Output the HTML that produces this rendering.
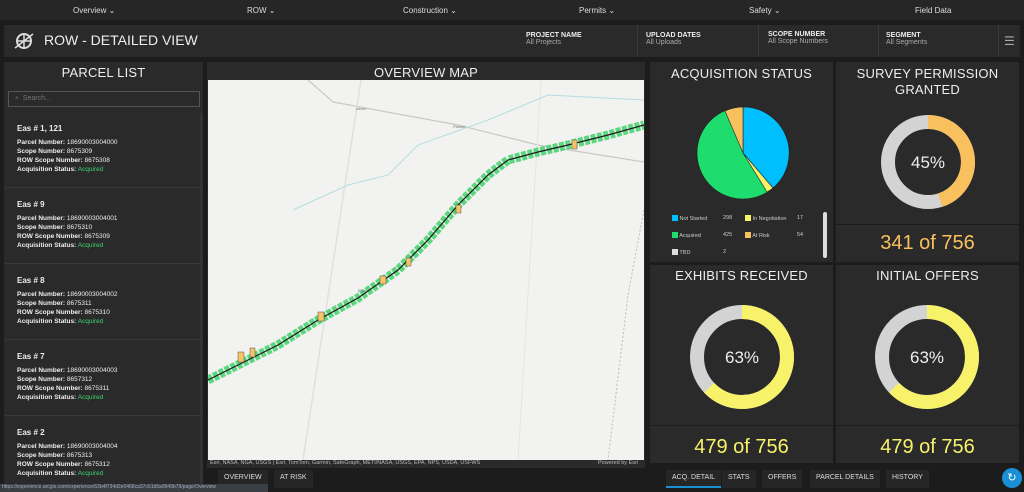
<!DOCTYPE html>
<html><head><meta charset="utf-8"><style>
*{margin:0;padding:0;box-sizing:border-box}
body{width:1024px;height:492px;background:#1c1c1c;font-family:"Liberation Sans",sans-serif;color:#ddd;position:relative;overflow:hidden}
.abs{position:absolute}
.panel{position:absolute;background:#2a2a2a}
.nav{left:0;top:0;width:1024px;height:20px;background:#262626;font-size:8px;color:#ddd}
.nav span{position:absolute;top:6px}
.title{font-size:13px;color:#eee;text-align:center;letter-spacing:.2px}
.f{position:absolute;top:7px;font-size:7px}
.f b{display:block;color:#eee;font-size:7px}
.f i{font-style:normal;color:#aaa}
.item{position:absolute;left:5px;width:196px;height:76px;border-bottom:1px solid #3a3a3a;font-size:6.5px;color:#eee;padding:12px 0 0 12px;line-height:9px}
.item h4{font-size:8px;margin-bottom:5px}
.item .g{color:#3cd46a}
.big{position:absolute;font-size:20px;text-align:center;width:183px}
.tab{position:absolute;top:470px;font-size:7px;color:#ddd;height:18px;line-height:16px;padding:0 6px;background:#262626}
.lg div{position:relative;height:17px}
.lg .n{position:absolute;top:0}
.sw{display:inline-block;width:6px;height:6px;vertical-align:-1px}
</style></head><body>
<div class="abs nav"><span style="left:73px">Overview ⌄</span><span style="left:247px">ROW ⌄</span><span style="left:403px">Construction ⌄</span><span style="left:579px">Permits ⌄</span><span style="left:749px">Safety ⌄</span><span style="left:915px">Field Data</span></div>
<div class="panel" style="left:4px;top:25px;width:1016px;height:32px"></div>
<svg class="abs" style="left:13px;top:31px" width="22" height="20" viewBox="0 0 22 20"><circle cx="11" cy="10" r="7" fill="none" stroke="#ddd" stroke-width="2"/><path d="M11 4v12M5 10h12M2 17L20 3" stroke="#ddd" stroke-width="1.5"/></svg>
<div class="abs" style="left:44px;top:32px;font-size:14px;color:#eee">ROW - DETAILED VIEW</div>
<div class="f" style="left:526px;top:32px"><b>PROJECT NAME</b><i>All Projects</i></div>
<div class="abs" style="left:637px;top:25px;width:1px;height:32px;background:#3a3a3a"></div>
<div class="f" style="left:646px;top:32px"><b>UPLOAD DATES</b><i>All Uploads</i></div>
<div class="abs" style="left:758px;top:25px;width:1px;height:32px;background:#3a3a3a"></div>
<div class="f" style="left:768px;top:31px"><b>SCOPE NUMBER</b><i>All Scope Numbers</i></div>
<div class="abs" style="left:878px;top:25px;width:1px;height:32px;background:#3a3a3a"></div>
<div class="f" style="left:886px;top:32px"><b>SEGMENT</b><i>All Segments</i></div>
<div class="abs" style="left:998px;top:25px;width:1px;height:32px;background:#3a3a3a"></div>
<div class="abs" style="left:1004px;top:34px;font-size:12px;color:#aaa">☰</div>

<div class="panel" style="left:4px;top:62px;width:199px;height:426px"></div>
<div class="abs title" style="left:4px;top:65px;width:199px">PARCEL LIST</div>
<div class="abs" style="left:8px;top:91px;width:192px;height:16px;border:1px solid #555;font-size:7px;color:#777;padding:3px 0 0 6px">⌕ &nbsp;Search...</div>
<div class="abs" style="left:200px;top:113px;width:3px;height:372px;background:#333"></div>
<div class="item" style="top:112px"><h4>Eas # 1, 121</h4><b>Parcel Number:</b> 18690003004000<br><b>Scope Number:</b> 8675309<br><b>ROW Scope Number:</b> 8675308<br><b>Acquisition Status:</b> <span class="g">Acquired</span></div>
<div class="item" style="top:188px"><h4>Eas # 9</h4><b>Parcel Number:</b> 18690003004001<br><b>Scope Number:</b> 8675310<br><b>ROW Scope Number:</b> 8675309<br><b>Acquisition Status:</b> <span class="g">Acquired</span></div>
<div class="item" style="top:264px"><h4>Eas # 8</h4><b>Parcel Number:</b> 18690003004002<br><b>Scope Number:</b> 8675311<br><b>ROW Scope Number:</b> 8675310<br><b>Acquisition Status:</b> <span class="g">Acquired</span></div>
<div class="item" style="top:340px"><h4>Eas # 7</h4><b>Parcel Number:</b> 18690003004003<br><b>Scope Number:</b> 8657312<br><b>ROW Scope Number:</b> 8675311<br><b>Acquisition Status:</b> <span class="g">Acquired</span></div>
<div class="item" style="top:416px;border:none"><h4>Eas # 2</h4><b>Parcel Number:</b> 18690003004004<br><b>Scope Number:</b> 8675313<br><b>ROW Scope Number:</b> 8675312<br><b>Acquisition Status:</b> <span class="g">Acquired</span></div>

<div class="panel" style="left:207px;top:62px;width:438px;height:406px"></div>
<div class="abs title" style="left:207px;top:65px;width:438px">OVERVIEW MAP</div>
<svg class="abs" style="left:208px;top:80px" width="436" height="380" viewBox="0 0 436 380">
<rect width="436" height="380" fill="#f2f2f0"/>
<path d="M100 0L125 22 250 45 330 65 436 82" stroke="#c8c8c8" stroke-width="1.2" fill="none"/>
<path d="M153 0L95 380" stroke="#e0e0e0" stroke-width="1.5" fill="none"/>
<path d="M333 0L310 380" stroke="#e4e4e4" fill="none"/>
<path d="M85 130L140 105 180 95 210 65 280 40 340 15 436 20" stroke="#b5dde3" fill="none"/>
<path d="M436 130L420 215 400 380" stroke="#bbb" stroke-dasharray="2 2" fill="none"/>
<path d="M0 300L30 285 70 265 110 240 150 218 190 190 220 160 250 125 280 95 300 80 330 72 360 65 400 55 436 45" stroke="#5cd67f" stroke-width="9" fill="none" stroke-dasharray="5 1.5"/>
<path d="M0 300L30 285 70 265 110 240 150 218 190 190 220 160 250 125 280 95 300 80 330 72 360 65 400 55 436 45" stroke="#1a1a1a" stroke-width="1.2" fill="none"/>
<g fill="#f5c36a" stroke="#333" stroke-width=".4"><rect x="30" y="272" width="6" height="10"/><rect x="42" y="268" width="5" height="9"/><rect x="110" y="232" width="6" height="9"/><rect x="172" y="196" width="6" height="8"/><rect x="198" y="178" width="5" height="8"/><rect x="248" y="125" width="5" height="8"/><rect x="364" y="60" width="5" height="9"/></g>
<text x="150" y="212" font-size="4" fill="#777">Elba</text><text x="148" y="30" font-size="4" fill="#777">Akron</text><text x="245" y="48" font-size="4" fill="#777">Platner</text>
</svg>
<div class="abs" style="left:210px;top:460px;font-size:5.5px;color:#bbb">Esri, NASA, NGA, USGS | Esri, TomTom, Garmin, SafeGraph, METI/NASA, USGS, EPA, NPS, USDA, USFWS</div>
<div class="abs" style="left:598px;top:460px;font-size:5.5px;color:#bbb">Powered by Esri</div>

<div class="panel" style="left:650px;top:62px;width:183px;height:200px"></div>
<div class="abs title" style="left:650px;top:66px;width:183px">ACQUISITION STATUS</div>
<svg class="abs" style="left:695px;top:105px" width="96" height="96" viewBox="-48 -48 96 96">
<circle r="46" fill="#1fdc6e" stroke="#222" stroke-width=".6"/>
<path d="M0 0L0 -46A46 46 0 0 1 30 35Z" fill="#00bfff" stroke="#222" stroke-width=".6"/>
<path d="M0 0L30 35A46 46 0 0 1 24 39Z" fill="#f7f26a" stroke="#222" stroke-width=".6"/>
<path d="M0 0L-18 -42A46 46 0 0 1 0 -46Z" fill="#f9c05e" stroke="#222" stroke-width=".6"/>
</svg>
<div class="abs lg" style="left:672px;top:215px;font-size:5.5px;color:#ccc;width:70px">
<div><span class="sw" style="background:#00bfff"></span> Not Started<span class="n" style="left:51px">298</span></div>
<div><span class="sw" style="background:#1fdc6e"></span> Acquired<span class="n" style="left:51px">425</span></div>
<div><span class="sw" style="background:#ddd"></span> TBD<span class="n" style="left:51px">2</span></div>
</div>
<div class="abs lg" style="left:745px;top:215px;font-size:5.5px;color:#ccc;width:70px">
<div><span class="sw" style="background:#f7f26a"></span> In Negotiation<span class="n" style="left:52px">17</span></div>
<div><span class="sw" style="background:#f9c05e"></span> At Risk<span class="n" style="left:52px">54</span></div>
</div>
<div class="abs" style="left:823px;top:212px;width:4px;height:46px;background:#ddd;border-radius:2px"></div>

<div class="panel" style="left:836px;top:62px;width:183px;height:162px"></div>
<div class="abs title" style="left:836px;top:66px;width:183px;line-height:16px">SURVEY PERMISSION<br>GRANTED</div>
<svg class="abs" style="left:878px;top:112px" width="100" height="100" viewBox="0 0 100 100"><circle cx="50" cy="50" r="40" fill="none" stroke="#d3d3d3" stroke-width="14"/><circle cx="50" cy="50" r="40" fill="none" stroke="#f9c05e" stroke-width="14" stroke-dasharray="113 300" transform="rotate(-90 50 50)"/><text x="50" y="56" fill="#eee" font-size="17" text-anchor="middle" font-family="Liberation Sans">45%</text></svg>
<div class="panel" style="left:836px;top:225px;width:183px;height:37px"></div>
<div class="big" style="left:836px;top:232px;color:#f9c05e">341 of 756</div>

<div class="panel" style="left:650px;top:265px;width:183px;height:160px"></div>
<div class="abs title" style="left:650px;top:268px;width:183px">EXHIBITS RECEIVED</div>
<svg class="abs" style="left:688px;top:303px" width="108" height="108" viewBox="0 0 108 108"><circle cx="54" cy="54" r="45" fill="none" stroke="#d3d3d3" stroke-width="14"/><circle cx="54" cy="54" r="45" fill="none" stroke="#f7f26a" stroke-width="14" stroke-dasharray="178 300" transform="rotate(-90 54 54)"/><text x="54" y="60" fill="#eee" font-size="17" text-anchor="middle" font-family="Liberation Sans">63%</text></svg>
<div class="panel" style="left:650px;top:426px;width:183px;height:37px"></div>
<div class="big" style="left:650px;top:436px;color:#f7f26a">479 of 756</div>

<div class="panel" style="left:836px;top:265px;width:183px;height:160px"></div>
<div class="abs title" style="left:836px;top:268px;width:183px">INITIAL OFFERS</div>
<svg class="abs" style="left:873px;top:303px" width="108" height="108" viewBox="0 0 108 108"><circle cx="54" cy="54" r="45" fill="none" stroke="#d3d3d3" stroke-width="14"/><circle cx="54" cy="54" r="45" fill="none" stroke="#f7f26a" stroke-width="14" stroke-dasharray="178 300" transform="rotate(-90 54 54)"/><text x="54" y="60" fill="#eee" font-size="17" text-anchor="middle" font-family="Liberation Sans">63%</text></svg>
<div class="panel" style="left:836px;top:426px;width:183px;height:37px"></div>
<div class="big" style="left:836px;top:436px;color:#f7f26a">479 of 756</div>

<div class="tab" style="left:218px">OVERVIEW</div>
<div class="tab" style="left:274px">AT RISK</div>
<div class="tab" style="left:666px;border-bottom:2px solid #1a8fd6">ACQ. DETAIL</div>
<div class="tab" style="left:722px">STATS</div>
<div class="tab" style="left:762px">OFFERS</div>
<div class="tab" style="left:810px">PARCEL DETAILS</div>
<div class="tab" style="left:886px">HISTORY</div>
<div class="abs" style="left:1002px;top:468px;width:20px;height:20px;border-radius:50%;background:#1a8fd6;color:#fff;font-size:11px;text-align:center;line-height:20px">↻</div>
<div class="abs" style="left:0;top:484px;width:268px;height:8px;background:#3a3e45;font-size:5px;color:#aab;padding-left:2px">https://experience.arcgis.com/experience/63b4f734d2e0468ca37c61b5a9949b79/page/Overview</div>
</body></html>
